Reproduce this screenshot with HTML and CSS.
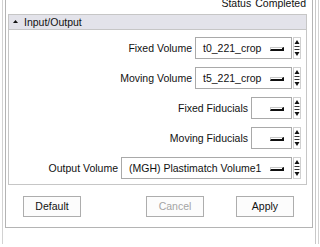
FILE: index.html
```html
<html>
    <head>
        <title>Plastimatch - Input/Output</title>
        <link rel="stylesheet" href="styles.css">
    </head>
    <body>
        <div class="window">
            <div class="frame">
                <div class="panel">
                    <div class="status"><span>Status</span><span>Completed</span></div>
                    <div class="group">
                        <div class="group-head">
                            <svg class="caret" width="5" height="3" viewBox="0 0 5 3"><polygon points="2.5,0 5,3 0,3" fill="#111"/></svg>
                            Input/Output
                        </div>
                        <div class="group-body">
                            <div class="row">
                                <span class="label">Fixed Volume</span>
                                <div class="combo w-vol"><span class="value">t0_221_crop</span><span class="ind"></span></div>
                                <svg class="spin" width="8" height="22" viewBox="0 0 8 22"><rect x="0.5" y="0.5" width="7" height="21" fill="#fff" stroke="#d0d0d0"/><polygon points="4,3 6.5,7 1.5,7" fill="#111"/><line x1="1.5" y1="9.5" x2="6.5" y2="9.5" stroke="#333"/><line x1="1.5" y1="12.5" x2="6.5" y2="12.5" stroke="#333"/><polygon points="1.5,15 6.5,15 4,19" fill="#111"/></svg>
                            </div>
                            <div class="row">
                                <span class="label">Moving Volume</span>
                                <div class="combo w-vol"><span class="value">t5_221_crop</span><span class="ind"></span></div>
                                <svg class="spin" width="8" height="22" viewBox="0 0 8 22"><rect x="0.5" y="0.5" width="7" height="21" fill="#fff" stroke="#d0d0d0"/><polygon points="4,3 6.5,7 1.5,7" fill="#111"/><line x1="1.5" y1="9.5" x2="6.5" y2="9.5" stroke="#333"/><line x1="1.5" y1="12.5" x2="6.5" y2="12.5" stroke="#333"/><polygon points="1.5,15 6.5,15 4,19" fill="#111"/></svg>
                            </div>
                            <div class="row">
                                <span class="label">Fixed Fiducials</span>
                                <div class="combo w-fid"><span class="value"></span><span class="ind"></span></div>
                                <svg class="spin" width="8" height="22" viewBox="0 0 8 22"><rect x="0.5" y="0.5" width="7" height="21" fill="#fff" stroke="#d0d0d0"/><polygon points="4,3 6.5,7 1.5,7" fill="#111"/><line x1="1.5" y1="9.5" x2="6.5" y2="9.5" stroke="#333"/><line x1="1.5" y1="12.5" x2="6.5" y2="12.5" stroke="#333"/><polygon points="1.5,15 6.5,15 4,19" fill="#111"/></svg>
                            </div>
                            <div class="row">
                                <span class="label">Moving Fiducials</span>
                                <div class="combo w-fid"><span class="value"></span><span class="ind"></span></div>
                                <svg class="spin" width="8" height="22" viewBox="0 0 8 22"><rect x="0.5" y="0.5" width="7" height="21" fill="#fff" stroke="#d0d0d0"/><polygon points="4,3 6.5,7 1.5,7" fill="#111"/><line x1="1.5" y1="9.5" x2="6.5" y2="9.5" stroke="#333"/><line x1="1.5" y1="12.5" x2="6.5" y2="12.5" stroke="#333"/><polygon points="1.5,15 6.5,15 4,19" fill="#111"/></svg>
                            </div>
                            <div class="row">
                                <span class="label">Output Volume</span>
                                <div class="combo w-out"><span class="value">(MGH) Plastimatch Volume1</span><span class="ind"></span></div>
                                <svg class="spin" width="8" height="22" viewBox="0 0 8 22"><rect x="0.5" y="0.5" width="7" height="21" fill="#fff" stroke="#d0d0d0"/><polygon points="4,3 6.5,7 1.5,7" fill="#111"/><line x1="1.5" y1="9.5" x2="6.5" y2="9.5" stroke="#333"/><line x1="1.5" y1="12.5" x2="6.5" y2="12.5" stroke="#333"/><polygon points="1.5,15 6.5,15 4,19" fill="#111"/></svg>
                            </div>
                        </div>
                    </div>
                    <div class="buttons">
                        <div class="btn b-default">Default</div>
                        <div class="btn b-cancel disabled">Cancel</div>
                        <div class="btn b-apply">Apply</div>
                    </div>
                </div>
            </div>
        </div>
    </body>
</html>
```

FILE: styles.css
```css
html, body {
    margin: 0;
    padding: 0;
    background: #ffffff;
    overflow: hidden;
}
body {
    font-family: "Liberation Sans", Arial, sans-serif;
    font-size: 10.5px;
    color: #111111;
}
.window {
    margin-left: 2px;
    width: 315px;
    height: 247px;
    border-left: 1px solid #d2d2d2;
    border-right: 1px solid #d2d2d2;
}
.frame {
    width: 312px;
    height: 247px;
    border-right: 1px solid #c8c8c8;
}
.panel {
    margin-left: 2px;
    width: 306px;
    border-left: 1px solid #b4b4b4;
    border-right: 1px solid #b4b4b4;
    border-bottom: 1px solid #b4b4b4;
}
.status {
    display: flex;
    justify-content: flex-end;
    gap: 4px;
    height: 12px;
    line-height: 12px;
    margin-top: -3px;
    padding-right: 6px;
}
.group {
    margin: 5px 5px 0 2px;
}
.group-head {
    display: flex;
    align-items: center;
    height: 14px;
    line-height: 14px;
    padding-left: 4px;
    background: #e3e3ea;
    border: 1px solid #c6c6c6;
}
.caret {
    margin-right: 6px;
    margin-top: -2px;
}
.group-body {
    border: 1px solid #c6c6c6;
    border-top: none;
    padding: 7px 5px 5px 0;
    display: flex;
    flex-direction: column;
    gap: 8px;
}
.row {
    display: flex;
    justify-content: flex-end;
    align-items: center;
    height: 22px;
}
.label {
    margin-right: 3px;
    margin-top: -1px;
}
.combo {
    box-sizing: border-box;
    height: 22px;
    display: flex;
    align-items: center;
    justify-content: space-between;
    padding: 0 7px 0 7px;
    background: #ffffff;
    border: 1px solid #a9a9a9;
}
.w-vol {
    width: 97px;
}
.w-fid {
    width: 41px;
}
.w-out {
    width: 171px;
}
.ind {
    width: 11px;
    height: 1px;
    border: 1px solid #c8c8c8;
    border-right: 2px solid #111111;
    border-bottom: 2px solid #111111;
    margin-top: 1px;
}
.spin {
    margin-left: 1px;
}
.buttons {
    display: flex;
    margin-top: 11px;
    padding-bottom: 10px;
}
.btn {
    box-sizing: border-box;
    width: 58px;
    height: 21px;
    line-height: 19px;
    text-align: center;
    background: #fcfcfc;
    border: 1px solid #adadad;
}
.b-default {
    margin-left: 17px;
}
.b-cancel {
    margin-left: 65px;
}
.b-apply {
    margin-left: 32px;
}
.disabled {
    color: #a4a4a4;
}
```
